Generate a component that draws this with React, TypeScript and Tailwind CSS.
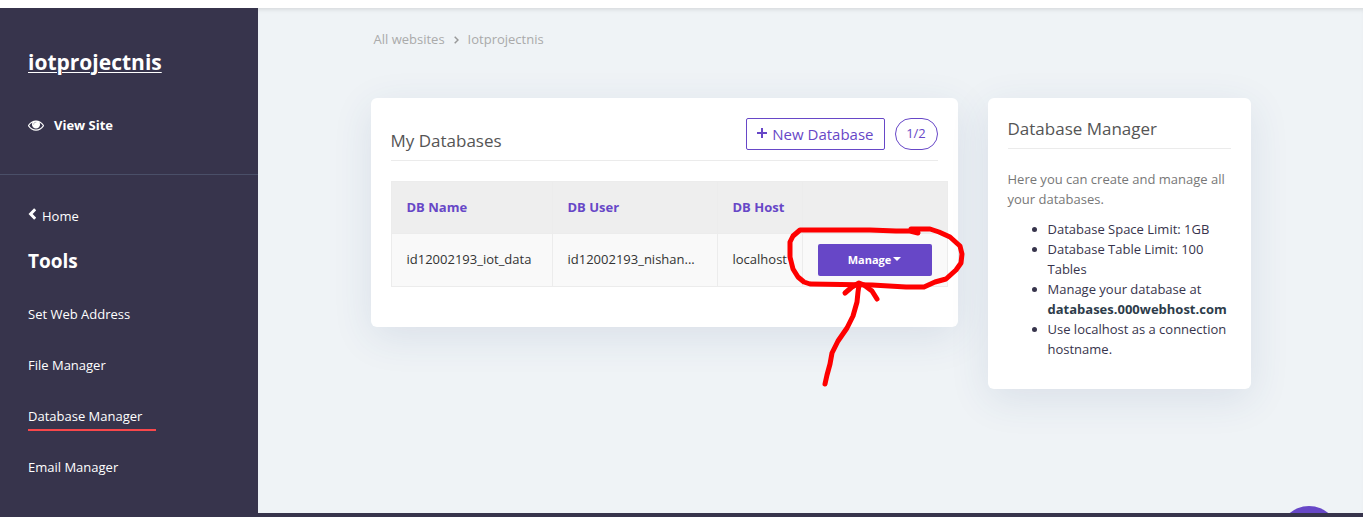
import React from 'react';

const EyeIcon = () => (
  <svg viewBox="0 0 1792 1792" className="size-4 fill-current" aria-hidden="true">
    <path d="M1664 960q-152-236-381-353 61 104 61 225 0 185-131.5 316.5t-316.5 131.5-316.5-131.5-131.5-316.5q0-121 61-225-229 117-381 353 133 205 333.5 326.5t434.5 121.5 434.5-121.5 333.5-326.5zm-720-384q0-20-14-34t-34-14q-125 0-214.5 89.5t-89.5 214.5q0 20 14 34t34 14 34-14 14-34q0-86 61-147t147-61q20 0 34-14t14-34zm848 384q0 34-20 69-140 230-376.5 368.5t-499.5 138.5-499.5-139-376.5-368q-20-35-20-69t20-69q140-229 376.5-368t499.5-139 499.5 139 376.5 368q20 35 20 69z" />
    <circle cx="896" cy="832" r="400" fillOpacity="0.6" />
  </svg>
);

const tools = ['Set Web Address', 'File Manager', 'Database Manager', 'Email Manager'];

function Sidebar() {
  return (
    <aside className="w-[258px] shrink-0 bg-[#37344c] text-white">
      <div className="border-b border-[#4a4f68] px-7 pt-[38px] pb-[38px]">
        <a href="#site" className="block text-[21px] leading-8 font-bold underline decoration-1 underline-offset-2">
          iotprojectnis
        </a>
        <a href="#view" className="mt-9 flex items-center gap-[10px] py-[1px] leading-5 font-bold">
          <EyeIcon />
          View Site
        </a>
      </div>
      <nav className="px-7 pt-[31px] pb-5">
        <a href="#home" className="flex items-center gap-[6px] leading-5">
          <svg viewBox="0 0 8 12" className="mb-1 h-3 w-2 fill-none stroke-current stroke-[3]" aria-hidden="true">
            <path d="M7.2 1.2 2.6 6 7.2 10.8" />
          </svg>
          Home
        </a>
        <h2 className="mt-5 text-[19px] leading-[30px] font-bold">Tools</h2>
        <ul className="mt-[25px] flex flex-col gap-[25px]">
          {tools.map((tool) => (
            <li key={tool} className="flex">
              <a
                href={'#' + tool}
                className={
                  tool === 'Database Manager'
                    ? '-mb-[2px] border-b-2 border-[#f9474b] pr-[14px] leading-[26px]'
                    : 'leading-[26px]'
                }
              >
                {tool}
              </a>
            </li>
          ))}
        </ul>
      </nav>
    </aside>
  );
}

const cell = 'border border-[#ececec] px-[15px] text-left whitespace-nowrap';
const card = 'rounded-md bg-white px-5 pt-5 shadow-[0_10px_40px_rgba(50,70,130,0.11)]';

function PenMark() {
  return (
    <svg
      viewBox="780 220 190 172"
      className="pointer-events-none absolute -top-6 -left-[38px] z-10 h-[172px] w-[190px] max-w-none fill-none stroke-[#fe0000] stroke-[5]"
      strokeLinecap="round"
      strokeLinejoin="round"
      aria-hidden="true"
    >
      <path d="M918 233 L910 231 L896 231 L870 230 L800 230 L793 236 L790 242 L790 257 L793 269 L798 277 L804 282 L810 284 L872 285 L906 287 L924 287 L935 282 L946 279 L956 270 L961 263 L962 254 L960 246 L950 237 L939 232 L930 229 L911 229" />
      <path d="M825 384 L827 375 L830 364 L832 353 L838 341 L847 328 L853 316 L857 302 L858 292 L859 285" />
      <path d="M845 293 L852 287 L859 283 L864 285 L872 291 L877 299" />
    </svg>
  );
}

function Databases() {
  return (
    <section className={card + ' min-w-0 flex-1 pb-10'}>
      <header className="flex items-start justify-between border-b border-[#ebebeb] pb-[10px]">
        <h1 className="pt-[14px] text-[17px] leading-[18px] whitespace-nowrap text-[#555]">My Databases</h1>
        <div className="flex gap-[10px] text-[#6747c7]">
          <button className="flex h-8 items-center gap-[5px] rounded-[2px] border border-[#6747c7] px-[10px] text-[15px] whitespace-nowrap">
            <svg viewBox="0 0 10 10" className="mb-[3px] size-[10px] fill-none stroke-current stroke-2" aria-hidden="true">
              <path d="M5 0v10M0 5h10" />
            </svg>
            New Database
          </button>
          <span className="flex h-8 w-[43px] items-center justify-center rounded-full border border-[#6747c7] text-[13px]">
            1/2
          </span>
        </div>
      </header>
      <div className="mt-5 -mr-[10px]">
        <table className="w-full table-fixed border-collapse text-[#333]">
          <colgroup>
            <col className="w-[161px]" />
            <col className="w-[165px]" />
            <col className="w-[85px]" />
            <col />
          </colgroup>
          <thead>
            <tr className="h-[52px] bg-[#eee] text-[#6747c7]">
              <th className={cell}>DB Name</th>
              <th className={cell}>DB User</th>
              <th className={cell}>DB Host</th>
              <th className={cell} aria-label="Actions" />
            </tr>
          </thead>
          <tbody>
            <tr className="h-[53px] bg-[#f9f9f9]">
              <td className={cell}>id12002193_iot_data</td>
              <td className={cell}>id12002193_nishan...</td>
              <td className={cell}>localhost</td>
              <td className={cell}>
                <div className="relative">
                  <button className="flex h-8 w-full items-center justify-center gap-[2px] rounded-[2px] bg-[#6747c7] text-[11px] font-bold text-white">
                    Manage
                    <svg viewBox="0 0 8 4" className="mb-[2px] h-1 w-2 fill-current" aria-hidden="true">
                      <path d="M0 0h8L4 4z" />
                    </svg>
                  </button>
                  <PenMark />
                </div>
              </td>
            </tr>
          </tbody>
        </table>
      </div>
    </section>
  );
}

function Info() {
  return (
    <section className={card + ' w-[263px] shrink-0 pb-[30px]'}>
      <h2 className="border-b border-[#ebebeb] pb-2 text-[17px] leading-[22px] text-[#555]">Database Manager</h2>
      <p className="mt-5 leading-5 text-[#777]">Here you can create and manage all your databases.</p>
      <ul className="mt-[10px] list-disc pl-10 leading-5 text-[#37344c]">
        <li>Database Space Limit: 1GB</li>
        <li>Database Table Limit: 100 Tables</li>
        <li>
          Manage your database at{' '}
          <a href="#databases" className="font-bold text-[#2d3c4a]">
            databases.000webhost.com
          </a>
        </li>
        <li>Use localhost as a connection hostname.</li>
      </ul>
    </section>
  );
}

export default function App() {
  return (
    <div className="flex min-h-screen flex-col font-['Open_Sans','Noto_Sans',sans-serif] text-[13px]">
      <div className="h-2 bg-white" />
      <div className="flex flex-1">
        <Sidebar />
        <main className="relative min-w-0 flex-1 overflow-hidden bg-[#eff3f6] shadow-[inset_0_4px_5px_-3px_rgba(0,0,0,0.13)]">
          <div className="mx-auto max-w-[880px]">
            <nav className="flex items-center gap-[9px] px-[3px] pt-[21px] leading-5 text-[#aaa]" aria-label="Breadcrumb">
              <a href="#all">All websites</a>
              <svg viewBox="0 0 5 8" className="mt-[2px] h-2 w-[5px] fill-none stroke-[#999] stroke-[1.5]" aria-hidden="true">
                <path d="M.7.7 4 4 .7 7.3" />
              </svg>
              <a href="#site">Iotprojectnis</a>
            </nav>
            <div className="mt-[49px] flex items-start gap-[30px]">
              <Databases />
              <Info />
            </div>
          </div>
          <button
            aria-label="Help"
            className="absolute right-6 -bottom-[53px] size-[60px] rounded-full bg-[#6747c7]"
          />
        </main>
      </div>
      <div className="h-1 bg-[#37344c]" />
    </div>
  );
}
